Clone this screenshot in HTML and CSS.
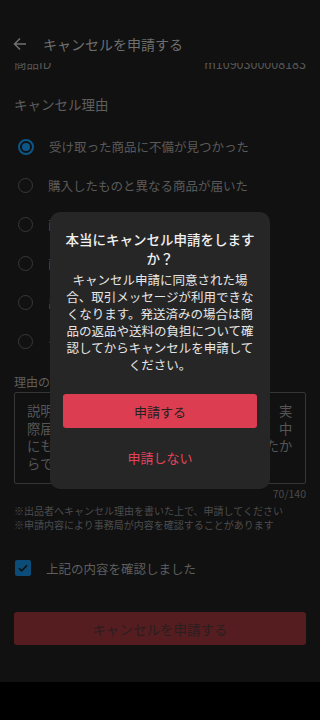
FILE: index.html
```html
<!DOCTYPE html>
<html lang="ja">
<head>
  <title>キャンセルを申請する</title>
  <meta charset="UTF-8" />
  <link rel="stylesheet" href="styles.css">
</head>
<body>
  <div class="screen">
    <div class="status"></div>

    <div class="appbar">
      <svg class="back" width="16" height="16" viewBox="0 0 16 16">
        <path d="M14 8H2.5M8 2.5L2.5 8 8 13.5" fill="none" stroke="#707070" stroke-width="1.5"/>
      </svg>
      <div class="appbar-title">キャンセルを申請する</div>
    </div>

    <div class="content">
      <div class="id-row">
        <span>商品ID</span>
        <span>m1090300008183</span>
      </div>

      <div class="label">キャンセル理由</div>

      <div class="radios">
        <div class="radio-row">
          <span class="radio on"></span>
          <span>受け取った商品に不備が見つかった</span>
        </div>
        <div class="radio-row">
          <span class="radio"></span>
          <span>購入したものと異なる商品が届いた</span>
        </div>
        <div class="radio-row">
          <span class="radio"></span>
          <span>商品の状態が説明と異なっていた</span>
        </div>
        <div class="radio-row">
          <span class="radio"></span>
          <span>商品が届かない</span>
        </div>
        <div class="radio-row">
          <span class="radio"></span>
          <span>出品者と連絡が取れない</span>
        </div>
        <div class="radio-row">
          <span class="radio"></span>
          <span>その他</span>
        </div>
      </div>

      <div class="label small">理由の詳細</div>
      <div class="textbox">説明には未使用品と書かれていましたが、実際届いた商品には大きな傷と汚れがあり、中にも欠品があり、使用できない状態だったからです。ご確認下さい</div>
      <div class="counter">70/140</div>

      <div class="notes">
        <div>※出品者へキャンセル理由を書いた上で、申請してください</div>
        <div>※申請内容により事務局が内容を確認することがあります</div>
      </div>

      <div class="check-row">
        <span class="checkbox">
          <svg width="12" height="12" viewBox="0 0 12 12">
            <path d="M2 6.2l2.6 2.6L10 3.4" fill="none" stroke="#111" stroke-width="1.6"/>
          </svg>
        </span>
        <span>上記の内容を確認しました</span>
      </div>

      <div class="submit">キャンセルを申請する</div>
    </div>

    <div class="dialog">
      <div class="dialog-title">本当にキャンセル申請をしますか？</div>
      <div class="dialog-text">キャンセル申請に同意された場合、取引メッセージが利用できなくなります。発送済みの場合は商品の返品や送料の負担について確認してからキャンセルを申請してください。</div>
      <div class="btn-primary">申請する</div>
      <div class="btn-text">申請しない</div>
    </div>
  </div>
</body>
</html>
```

FILE: styles.css
```css
body {
  margin: 0;
  background: #000;
  font-family: "Noto Sans CJK JP", "Noto Sans", sans-serif;
}

.screen {
  position: relative;
  width: 320px;
  height: 682px;
  background: #111;
  overflow: hidden;
  display: flex;
  flex-direction: column;
}

.status {
  height: 25px;
}

.appbar {
  height: 38px;
  display: flex;
  align-items: center;
  padding-left: 12px;
  background: #111;
}

.appbar-title {
  margin-left: 15px;
  font-size: 14px;
  color: #6e6e6e;
}

.content {
  flex: 1;
  overflow: hidden;
}

.id-row {
  margin-top: -7px;
  padding: 0 14px;
  display: flex;
  justify-content: space-between;
  font-size: 12.5px;
  line-height: 16px;
  color: #575757;
}

.label {
  margin-top: 22px;
  padding: 0 14px;
  font-size: 13.5px;
  line-height: 20px;
  color: #5e5e5e;
}

.label.small {
  margin-top: 12px;
  font-size: 12px;
  line-height: 18px;
}

.radios {
  margin-top: 13px;
}

.radio-row {
  height: 39px;
  display: flex;
  align-items: center;
  padding-left: 18px;
  font-size: 12.5px;
  color: #5a5a5a;
}

.radio {
  width: 13px;
  height: 13px;
  border: 1.5px solid #383838;
  border-radius: 50%;
  margin-right: 15px;
  position: relative;
}

.radio.on {
  border: 2px solid #0c5688;
  width: 12px;
  height: 12px;
}

.radio.on::after {
  content: "";
  position: absolute;
  left: 2px;
  top: 2px;
  width: 8px;
  height: 8px;
  border-radius: 50%;
  background: #0c5688;
}

.textbox {
  margin: 1px 14px 0;
  height: 72px;
  padding: 9px 12px;
  border: 1px solid #353535;
  border-radius: 2px;
  font-size: 13.3px;
  line-height: 17.5px;
  color: #555;
  overflow: hidden;
}

.counter {
  margin-top: 3px;
  padding-right: 14px;
  text-align: right;
  font-size: 10.5px;
  line-height: 14px;
  color: #4a4a4a;
}

.notes {
  margin-top: 3px;
  padding: 0 14px;
  font-size: 10px;
  line-height: 14px;
  color: #4c4c4c;
}

.check-row {
  margin-top: 24px;
  height: 24px;
  display: flex;
  align-items: center;
  padding-left: 15px;
  font-size: 12.5px;
  color: #5e5e5e;
}

.checkbox {
  width: 16px;
  height: 16px;
  border-radius: 2px;
  background: #0c4c78;
  margin-right: 15px;
  display: flex;
  align-items: center;
  justify-content: center;
}

.submit {
  margin: 32px 14px 0;
  height: 33px;
  border-radius: 3px;
  background: #561d21;
  color: #2a1e1e;
  font-size: 13.5px;
  display: flex;
  align-items: center;
  justify-content: center;
}

.dialog {
  position: absolute;
  left: 50px;
  top: 212px;
  width: 194px;
  padding: 18px 13px 15px;
  background: #262626;
  border-radius: 10px;
  text-align: center;
}

.dialog-title {
  font-size: 13.5px;
  line-height: 19px;
  font-weight: 500;
  color: #f0f0f0;
}

.dialog-text {
  margin-top: 3px;
  font-size: 12.5px;
  line-height: 17px;
  color: #e6e6e6;
}

.btn-primary {
  margin-top: 21px;
  height: 34px;
  border-radius: 3px;
  background: #dc3d51;
  color: #222;
  font-size: 13px;
  display: flex;
  align-items: center;
  justify-content: center;
}

.btn-text {
  margin-top: 12px;
  height: 34px;
  color: #e5425a;
  font-size: 13px;
  display: flex;
  align-items: center;
  justify-content: center;
}
```
